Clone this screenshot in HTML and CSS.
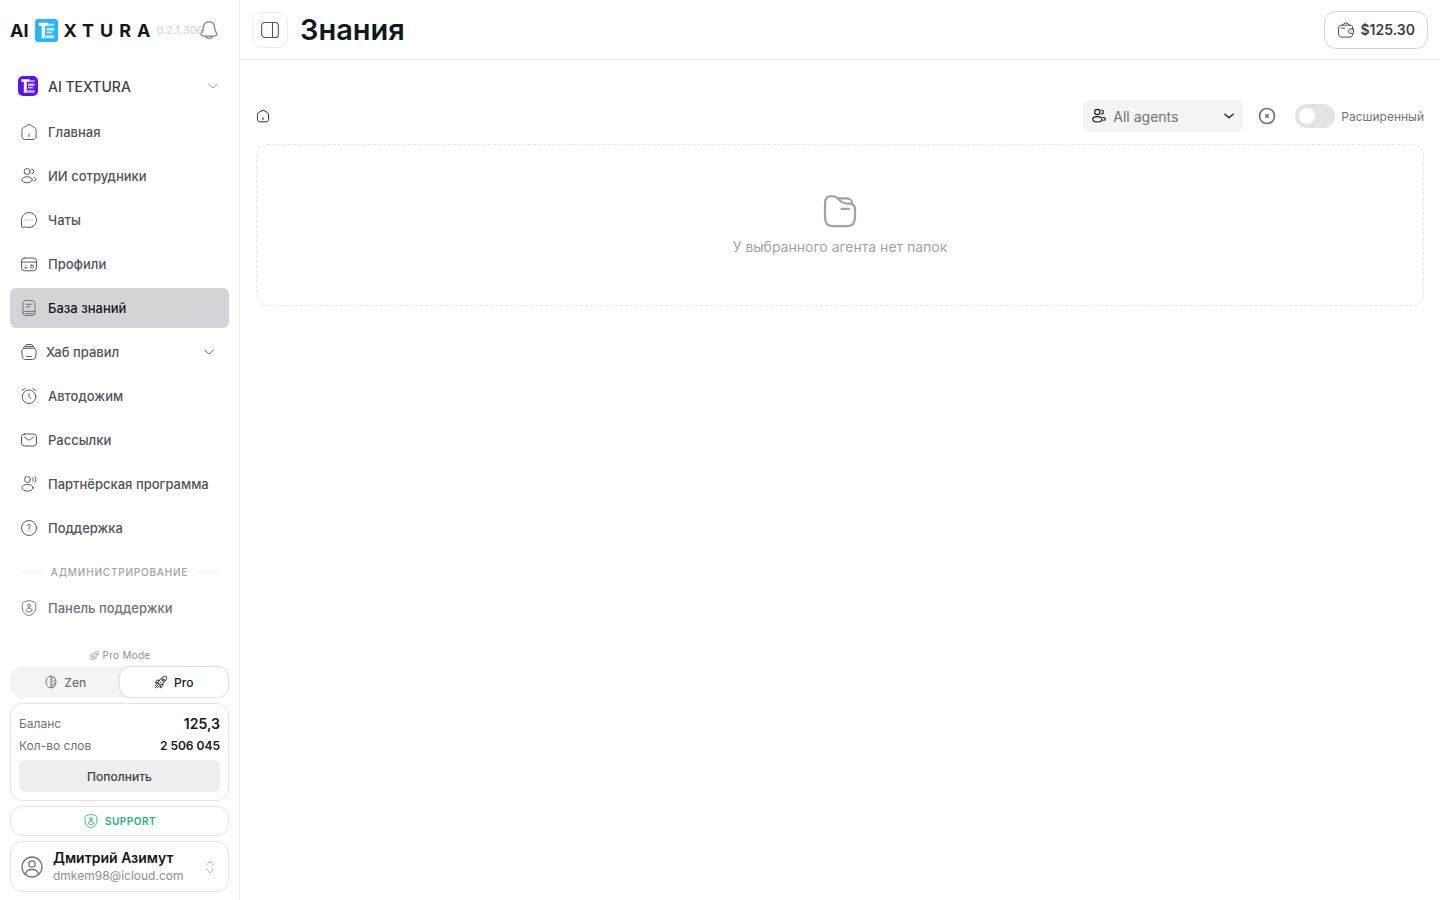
FILE: index.html
```html
<!DOCTYPE html>
<html lang="ru">
<head>
  <meta charset="UTF-8" />
  <meta name="viewport" content="width=device-width, initial-scale=1.0" />
  <title>AI TEXTURA | Знания</title>
  <link rel="stylesheet" href="styles.css">
</head>
<body>
  <svg class="sprite" aria-hidden="true">
    <symbol id="i-home" viewBox="0 0 24 24"><path d="M2.500 12.200c0-2.300 0-3.400.5-4.400.5-.9 1.500-1.500 3.400-2.700l2-1.300C10.200 2.600 11.100 2 12 2s1.800.6 3.600 1.800l2 1.300c1.900 1.200 2.900 1.800 3.400 2.700.5 1 .5 2.100.5 4.400v1.500c0 3.900 0 5.900-1.200 7.100-1.100 1.200-3 1.200-6.800 1.200h-3c-3.800 0-5.700 0-6.800-1.200-1.200-1.200-1.200-3.200-1.200-7.100z"/><path d="M12 15v3"/></symbol>
    <symbol id="i-users" viewBox="0 0 24 24"><circle cx="9.500" cy="6" r="4"/><path d="M15.500 9a3 3 0 0 0 0-6"/><ellipse cx="9.500" cy="17" rx="7" ry="4"/><path d="M18.500 14c1.750.380 3 1.360 3 2.500 0 1.030-1 1.920-2.500 2.370"/></symbol>
    <symbol id="i-chat" viewBox="0 0 24 24"><path d="M12 22c5.500 0 10-4.500 10-10S17.500 2 12 2 2 6.500 2 12v8.500c0 .9.600 1.500 1.500 1.300L6 21.200c.5-.1 1 0 1.500.1 1.400.4 2.900.7 4.500.7z"/><path d="M8 12h.01M12 12h.01M16 12h.01"/></symbol>
    <symbol id="i-card" viewBox="0 0 24 24"><rect x="2" y="4" width="20" height="17" rx="4"/><path d="M2.500 9.500h19M6 17h4M7.500 14h.5"/><rect x="14" y="13.500" width="4" height="4" rx="1.500"/></symbol>
    <symbol id="i-book" viewBox="0 0 24 24"><path d="M4 19V7c0-3 1-5 4-5h8c3 0 4 2 4 5v11c0 3-1 4-4 4H8c-2.500 0-4-1-4-3s1-2.500 3-2.500h13M8 7h8M8 10.500h5M7 19.500h12"/></symbol>
    <symbol id="i-archive" viewBox="0 0 24 24"><path d="M2.500 13c-.5-3.500.5-6 4-6h11c3.500 0 4.500 2.500 4 6l-.7 5c-.4 3-1.500 4-4.300 4H7.500c-2.800 0-3.900-1-4.300-4zM4.500 7c.2-1.500 1-2.200 2.500-2.200h10c1.500 0 2.300.7 2.500 2.200M7 4.800C7.200 3 8 2 9 2h6c1 0 1.800 1 2 2.800M9 18h6"/></symbol>
    <symbol id="i-alarm" viewBox="0 0 24 24"><circle cx="12" cy="13" r="9"/><path d="M12 9v4l2.500 2.500M3 4.500 7 2M21 4.500 17 2"/></symbol>
    <symbol id="i-mail" viewBox="0 0 24 24"><rect x="2" y="4" width="20" height="16" rx="4"/><path d="m6 8 2.200 1.800c1.800 1.500 2.800 2.200 3.800 2.200s2-.7 3.800-2.200L18 8"/></symbol>
    <symbol id="i-partner" viewBox="0 0 24 24"><circle cx="10" cy="6" r="4"/><ellipse cx="10" cy="17" rx="7.500" ry="4.500"/><path d="M17 4c.7 1.300.7 2.700 0 4M20 2c1.500 2.700 1.500 5.300 0 8"/></symbol>
    <symbol id="i-help" viewBox="0 0 24 24"><circle cx="12" cy="12" r="10"/><path d="M10.100 8.900a1.900 1.900 0 1 1 2.800 1.700c-.5.300-.9.800-.9 1.400v1M12 16v.01"/></symbol>
    <symbol id="i-shield" viewBox="0 0 24 24"><path d="M3 10.400c0-3.200 0-4.800.4-5.300.4-.6 1.900-1.100 4.900-2.100C10.200 2.300 11 2 12 2s1.800.3 3.700 1c3 1 4.500 1.500 4.900 2.100.4.500.4 2.100.4 5.300V12c0 5.600-4.200 8.400-6.900 9.500-.7.300-1.100.5-2.100.5s-1.400-.2-2.100-.5C7.200 20.400 3 17.600 3 12z"/><circle cx="12" cy="9" r="2"/><path d="M16 15c0 1.100 0 2-4 2s-4-.9-4-2 1.800-3 4-3 4 1.900 4 3z"/></symbol>
    <symbol id="i-rocket" viewBox="0 0 24 24"><path d="m7 14.500 2.500 2.500c.8.800 1.700.5 2.600-.2l6.400-5.300c2-1.700 3-4.500 3.200-7.200.1-1.300-.7-2.100-2-2-2.700.2-5.500 1.200-7.200 3.200L7.200 11.900c-.7.900-1 1.800-.2 2.600z"/><circle cx="15.500" cy="8.500" r="2"/><path d="M9.500 9H6c-1.500 0-3 2-4 4l5 .5M15 14.500V18c0 1.500-2 3-4 4l-.5-5M2.500 21.500 7 17M2 18l3-3M6 22l3-3M10 14l2-2"/></symbol>
    <symbol id="i-zen" viewBox="0 0 24 24"><path d="M12 2c5 0 8.500 4.500 8.500 10S17 22 12 22s-8.500-4.500-8.500-10S7 2 12 2zM12 2v20M12 8l5-4M12 13l8-5M12 18l8.500-5M13 21.500l6-4"/></symbol>
    <symbol id="i-bell" viewBox="0 0 24 24"><path d="M12 2c-4 0-6.700 3-6.700 7 0 2-.3 3.300-1.200 4.800C3 15.500 2 16.600 2.500 17.800 3.100 19 5.500 19.500 12 19.500s8.900-.5 9.500-1.700c.5-1.200-.5-2.300-1.600-4-.9-1.500-1.200-2.800-1.200-4.800 0-4-2.700-7-6.700-7zM8 20c.8 3 7.200 3 8 0"/></symbol>
    <symbol id="i-user" viewBox="0 0 24 24"><circle cx="12" cy="12" r="10"/><circle cx="12" cy="9" r="3.200"/><path d="M5.500 19.500c.5-3.500 3-5 6.500-5s6 1.500 6.500 5"/></symbol>
    <symbol id="i-panel" viewBox="0 0 24 24"><rect x="2" y="3" width="20" height="18" rx="4"/><path d="M15 3v18"/></symbol>
    <symbol id="i-wallet" viewBox="0 0 24 24"><path d="M21 10.500c-.1-2.500-.4-3.500-1.200-4.300C18.700 5.500 17 5.500 14 5.500h-4c-3.800 0-5.700 0-6.800 1.200S2 9.700 2 13.500s0 5.700 1.200 6.900S6.200 21.500 10 21.500h4c3 0 4.700 0 5.800-1 .8-.8 1.100-1.900 1.200-4M21 10.500h-2.500c-2 0-3.500 1.300-3.500 3s1.500 3 3.500 3H21c.6 0 1-.4 1-1v-4c0-.6-.4-1-1-1zM18.500 13.500h.01M6 9.500h4M7 5.500l3.700-2.700c.8-.6 1.800-.6 2.600 0L17 5.500"/></symbol>
    <symbol id="i-close" viewBox="0 0 24 24"><circle cx="12" cy="12" r="10"/><path d="m10.500 10.500 3 3m0-3-3 3"/></symbol>
    <symbol id="i-folder" viewBox="0 0 24 24"><path d="M2 7c0-3 1-5 4-5 2 0 3 .2 4 1.200l1.500 1.500C13 6.200 13.500 6.800 16 7h2c3 0 4 1.500 4 4v5c0 4-1.500 6-5 6H7c-3.500 0-5-2-5-6zM10.500 3.500H16c3 0 4 1 4 3.700M13 10.500h5"/></symbol>
    <symbol id="i-down" viewBox="0 0 24 24"><path d="m5 9 7 6 7-6"/></symbol>
    <symbol id="i-updown" viewBox="0 0 24 24"><path d="m7 9 5-6 5 6M7 15l5 6 5-6"/></symbol>
    <symbol id="i-mark" viewBox="0 0 24 24"><path class="mark-t" d="M4 4h10v3h-3.500v13H7V7H4z"/><path class="mark-e" d="M14 5h6v2h-6zM12 9h8v3h-8zM12 13h6v2h-6zM11 17h9v3h-9z"/></symbol>
  </svg>

  <div class="app">
    <aside class="sidebar">
      <div class="brand">
        <a class="logo" href="#"><span>AI</span><svg class="logo-mark"><use href="#i-mark"/></svg><span class="logo-word">XTURA</span></a>
        <span class="version">0.2.1.306</span>
        <button class="bell" aria-label="Уведомления"><svg class="icon"><use href="#i-bell"/></svg></button>
      </div>

      <button class="workspace">
        <svg class="workspace-mark"><use href="#i-mark"/></svg>
        <span>AI TEXTURA</span>
        <svg class="icon chevron"><use href="#i-down"/></svg>
      </button>

      <nav class="nav">
        <a class="nav-item" href="#"><svg class="icon"><use href="#i-home"/></svg>Главная</a>
        <a class="nav-item" href="#"><svg class="icon"><use href="#i-users"/></svg>ИИ сотрудники</a>
        <a class="nav-item" href="#"><svg class="icon"><use href="#i-chat"/></svg>Чаты</a>
        <a class="nav-item" href="#"><svg class="icon"><use href="#i-card"/></svg>Профили</a>
        <a class="nav-item active" href="#"><svg class="icon"><use href="#i-book"/></svg>База знаний</a>
        <button class="nav-item nav-group"><svg class="icon"><use href="#i-archive"/></svg>Хаб правил<svg class="icon chevron"><use href="#i-down"/></svg></button>
        <a class="nav-item" href="#"><svg class="icon"><use href="#i-alarm"/></svg>Автодожим</a>
        <a class="nav-item" href="#"><svg class="icon"><use href="#i-mail"/></svg>Рассылки</a>
        <a class="nav-item" href="#"><svg class="icon"><use href="#i-partner"/></svg>Партнёрская программа</a>
        <a class="nav-item" href="#"><svg class="icon"><use href="#i-help"/></svg>Поддержка</a>
        <div class="nav-divider">Администрирование</div>
        <a class="nav-item muted" href="#"><svg class="icon"><use href="#i-shield"/></svg>Панель поддержки</a>
      </nav>

      <div class="sidebar-footer">
        <div class="mode-label"><svg class="icon"><use href="#i-rocket"/></svg>Pro Mode</div>
        <div class="modes">
          <button class="mode"><svg class="icon"><use href="#i-zen"/></svg>Zen</button>
          <button class="mode selected"><svg class="icon"><use href="#i-rocket"/></svg>Pro</button>
        </div>
        <div class="balance">
          <div class="balance-row"><span>Баланс</span><strong class="balance-sum">125,3</strong></div>
          <div class="balance-row"><span>Кол-во слов</span><strong>2 506 045</strong></div>
          <button class="topup">Пополнить</button>
        </div>
        <button class="support"><svg class="icon"><use href="#i-shield"/></svg>SUPPORT</button>
        <button class="account">
          <svg class="icon avatar"><use href="#i-user"/></svg>
          <span class="account-text"><span class="account-name">Дмитрий Азимут</span><span class="account-mail">dmkem98@icloud.com</span></span>
          <svg class="icon updown"><use href="#i-updown"/></svg>
        </button>
      </div>
    </aside>

    <main class="main">
      <header class="topbar">
        <button class="panel-toggle" aria-label="Свернуть меню"><svg class="icon"><use href="#i-panel"/></svg></button>
        <h1>Знания</h1>
        <button class="wallet"><svg class="icon"><use href="#i-wallet"/></svg>$125.30</button>
      </header>

      <section class="content">
        <div class="toolbar">
          <a class="crumb" href="#" aria-label="Главная"><svg class="icon"><use href="#i-home"/></svg></a>
          <div class="filters">
            <div class="agent-select">
              <svg class="icon"><use href="#i-users"/></svg>
              <select aria-label="Агент"><option>All agents</option></select>
              <svg class="icon arrow"><use href="#i-down"/></svg>
            </div>
            <button class="clear" aria-label="Сбросить"><svg class="icon"><use href="#i-close"/></svg></button>
            <label class="switch"><input type="checkbox">Расширенный</label>
          </div>
        </div>
        <div class="empty">
          <svg class="icon"><use href="#i-folder"/></svg>
          <p>У выбранного агента нет папок</p>
        </div>
      </section>
    </main>
  </div>
</body>
</html>
```
FILE: styles.css
```css
* {
  box-sizing: border-box;
}

body {
  margin: 0;
  font-family: Inter, "Liberation Sans", sans-serif;
  font-size: 13px;
  color: #11181c;
  background: #fff;
}

button, select, input {
  font: inherit;
  color: inherit;
  margin: 0;
  padding: 0;
  border: 0;
  background: none;
}

button {
  cursor: pointer;
}

a {
  color: inherit;
  text-decoration: none;
}

.sprite {
  display: none;
}

.icon {
  flex: none;
  width: 20px;
  height: 20px;
  fill: none;
  stroke: currentColor;
  stroke-width: 1.3;
  stroke-linecap: round;
  stroke-linejoin: round;
}

.app {
  display: flex;
  min-height: 100vh;
}

/* sidebar */
.sidebar {
  display: flex;
  flex-direction: column;
  flex: none;
  width: 240px;
  padding: 0 10px 8px;
  border-right: 1px solid #ebebec;
}

.brand {
  display: flex;
  align-items: center;
  height: 60px;
  margin-bottom: 6px;
}

.logo {
  display: flex;
  align-items: center;
  gap: 6px;
  font-size: 18px;
  font-weight: 700;
}

.logo-mark {
  width: 23px;
  height: 23px;
  border-radius: 3px;
  background: #29b6f6;
}

.logo-word {
  letter-spacing: 6px;
}

.mark-t {
  fill: #fff;
}

.mark-e {
  fill: #fff;
  opacity: 0.7;
}

.version {
  font-size: 11px;
  color: #d0d0d4;
}

.bell {
  display: flex;
  margin-left: -4px;
  color: #8e8e93;
}

.bell .icon {
  stroke-width: 1.8;
}

.workspace {
  display: flex;
  align-items: center;
  gap: 10px;
  height: 40px;
  padding: 0 8px;
  margin-bottom: 6px;
  font-size: 14px;
  font-weight: 500;
  color: #3f3f46;
}

.workspace-mark {
  width: 20px;
  height: 20px;
  border-radius: 5px;
  background: #5b13ec;
}

.chevron {
  width: 16px;
  height: 16px;
  margin-left: auto;
}

.workspace .chevron {
  color: #8e8e93;
}

.nav {
  display: flex;
  flex-direction: column;
  gap: 4px;
}

.nav-item {
  display: flex;
  align-items: center;
  gap: 10px;
  height: 40px;
  padding: 0 10px;
  border-radius: 6px;
  font-weight: 500;
  color: #52525b;
}

.nav-item .icon {
  width: 18px;
  height: 18px;
}

.nav-group {
  gap: 8px;
}

.nav-item .chevron {
  width: 16px;
  height: 16px;
  margin-right: 2px;
}

.nav-item.active {
  background: #d4d4d8;
  color: #18181b;
}

.nav-item.active .icon {
  color: #71717a;
}

.nav-item.muted {
  color: #71717a;
}

.nav-divider {
  display: flex;
  align-items: center;
  gap: 8px;
  height: 32px;
  padding: 8px 10px 0;
  font-size: 10px;
  font-weight: 500;
  letter-spacing: 0.08em;
  text-transform: uppercase;
  color: #a1a1aa;
}

.nav-divider::before,
.nav-divider::after {
  content: "";
  flex: 1;
  height: 1px;
  background: #f0f0f1;
}

.sidebar-footer {
  display: flex;
  flex-direction: column;
  gap: 5px;
  margin-top: auto;
}

.mode-label {
  display: flex;
  align-items: center;
  justify-content: center;
  gap: 3px;
  height: 12px;
  font-size: 10px;
  letter-spacing: 0.025em;
  color: #8e8e93;
}

.mode-label .icon {
  width: 11px;
  height: 11px;
}

.modes {
  display: flex;
  height: 32px;
  padding: 1px;
  border-radius: 12px;
  background: #f4f4f5;
}

.mode {
  display: flex;
  flex: 1;
  align-items: center;
  justify-content: center;
  gap: 6px;
  border-radius: 10px;
  font-size: 12px;
  font-weight: 500;
  color: #71717a;
}

.mode .icon {
  width: 14px;
  height: 14px;
  stroke-width: 1.6;
}

.mode.selected {
  background: #fff;
  color: #18181b;
  box-shadow: 0 0 3px rgba(0, 0, 0, 0.2);
}

.balance,
.support,
.account {
  border: 1px solid #e4e4e7;
  border-radius: 12px;
}

.balance {
  padding: 8px;
}

.balance-row {
  display: flex;
  align-items: center;
  justify-content: space-between;
  height: 22px;
  font-size: 12px;
  color: #71717a;
}

.balance-row strong {
  font-weight: 600;
  color: #18181b;
}

.balance-row .balance-sum {
  font-size: 14px;
}

.topup {
  width: 100%;
  height: 32px;
  margin-top: 4px;
  border-radius: 6px;
  background: #eeeeee;
  font-size: 12px;
  font-weight: 500;
  color: #3f3f46;
}

.support {
  display: flex;
  align-items: center;
  justify-content: center;
  gap: 6px;
  height: 30px;
  font-size: 10px;
  font-weight: 600;
  letter-spacing: 0.05em;
  color: #17b578;
}

.support .icon {
  width: 16px;
  height: 16px;
}

.account {
  display: flex;
  align-items: center;
  gap: 9px;
  height: 51px;
  padding: 0 10px 0 9px;
  text-align: left;
}

.avatar {
  width: 24px;
  height: 24px;
  color: #71717a;
}

.account-text {
  display: flex;
  flex: 1;
  flex-direction: column;
}

.account-name {
  font-size: 14px;
  font-weight: 600;
  line-height: 18px;
}

.account-mail {
  font-size: 12px;
  line-height: 18px;
  color: #8e8e93;
}

.updown {
  width: 16px;
  height: 16px;
  color: #a1a1aa;
}

/* main */
.main {
  flex: 1;
  min-width: 0;
}

.topbar {
  display: flex;
  align-items: center;
  gap: 12px;
  height: 60px;
  padding: 0 12px;
  border-bottom: 1px solid #ebebec;
}

.topbar h1 {
  margin: 0;
  font-size: 29px;
  font-weight: 600;
}

.panel-toggle {
  display: flex;
  align-items: center;
  justify-content: center;
  width: 36px;
  height: 36px;
  border: 1px solid #ebebec;
  border-radius: 10px;
  color: #52525b;
}

.wallet {
  display: flex;
  align-items: center;
  gap: 6px;
  height: 38px;
  margin-left: auto;
  padding: 0 12px;
  border: 1px solid #d4d4d8;
  border-radius: 12px;
  font-size: 14px;
  font-weight: 600;
  color: #3f3f46;
}

.wallet .icon {
  width: 18px;
  height: 18px;
}

.content {
  padding: 40px 16px;
}

.toolbar {
  display: flex;
  align-items: center;
  justify-content: space-between;
  height: 32px;
  margin-bottom: 12px;
}

.crumb {
  display: flex;
}

.crumb .icon {
  width: 14px;
  height: 14px;
  stroke-width: 1.7;
}

.filters {
  display: flex;
  align-items: center;
  gap: 15px;
}

.agent-select {
  position: relative;
  display: flex;
  width: 160px;
  height: 32px;
}

.agent-select select {
  appearance: none;
  width: 100%;
  padding: 0 30px;
  border-radius: 6px;
  background: #f4f4f5;
  font-size: 14px;
  color: #71717a;
}

.agent-select .icon {
  position: absolute;
  top: 8px;
  left: 8px;
  width: 16px;
  height: 16px;
  stroke-width: 1.7;
  pointer-events: none;
}

.agent-select .arrow {
  top: 9px;
  right: 7px;
  left: auto;
  width: 14px;
  height: 14px;
  stroke-width: 2.2;
}

.clear {
  display: flex;
  color: #71717a;
}

.clear .icon {
  width: 18px;
  height: 18px;
  stroke-width: 2.2;
}

.switch {
  display: flex;
  align-items: center;
  gap: 6px;
  margin-left: 4px;
  font-size: 12px;
  color: #71717a;
  cursor: pointer;
}

.switch input {
  appearance: none;
  width: 40px;
  height: 24px;
  padding: 4px;
  border-radius: 12px;
  background: #e4e4e7;
  cursor: pointer;
}

.switch input::before {
  content: "";
  display: block;
  width: 16px;
  height: 16px;
  border-radius: 50%;
  background: #fff;
}

.switch input:checked {
  background: #5b13ec;
}

.switch input:checked::before {
  margin-left: auto;
}

.empty {
  display: flex;
  flex-direction: column;
  align-items: center;
  gap: 7px;
  padding: 48px 16px;
  border: 1px dashed #e4e4e7;
  border-radius: 12px;
  color: #a1a1aa;
}

.empty .icon {
  width: 36px;
  height: 36px;
  stroke-width: 1.5;
}

.empty p {
  margin: 0;
  font-size: 14px;
  line-height: 21px;
}

@media (max-width: 768px) {
  .app {
    flex-direction: column;
  }

  .sidebar {
    width: 100%;
  }
}
```
